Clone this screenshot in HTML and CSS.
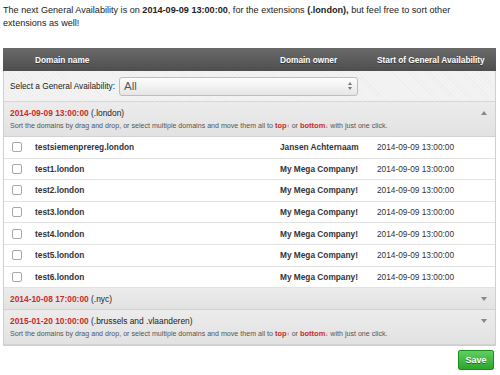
FILE: index.html
```html
<!DOCTYPE html>
<html lang="en">
<head>
    <meta charset="UTF-8">
    <title>General Availability order</title>
    <link rel="stylesheet" href="styles.css">
</head>
<body>
    <p class="intro">The next General Availability is on <b>2014-09-09 13:00:00</b>, for the extensions <b>(.london),</b> but feel free to sort other extensions as well!</p>

    <div class="ga-table">
        <div class="ga-head">
            <span></span>
            <span>Domain name</span>
            <span>Domain owner</span>
            <span>Start of General Availability</span>
        </div>

        <div class="ga-filter">
            <label>Select a General Availability:</label>
            <div class="select">
                <span>All</span>
                <span class="spin"><i class="up"></i><i class="down"></i></span>
            </div>
        </div>

        <!-- .london -->
        <div class="group open">
            <div class="group-title"><span class="date">2014-09-09 13:00:00</span> (.london)</div>
            <div class="group-desc">Sort the domains by drag and drop, or select multiple domains and move them all to <b>top<small>↑</small></b> or <b>bottom<small>↓</small></b> with just one click.</div>
            <span class="caret up"></span>
        </div>
        <div class="row"><span class="check"></span><b>testsiemenprereg.london</b><b>Jansen Achternaam</b><span>2014-09-09 13:00:00</span></div>
        <div class="row"><span class="check"></span><b>test1.london</b><b>My Mega Company!</b><span>2014-09-09 13:00:00</span></div>
        <div class="row"><span class="check"></span><b>test2.london</b><b>My Mega Company!</b><span>2014-09-09 13:00:00</span></div>
        <div class="row"><span class="check"></span><b>test3.london</b><b>My Mega Company!</b><span>2014-09-09 13:00:00</span></div>
        <div class="row"><span class="check"></span><b>test4.london</b><b>My Mega Company!</b><span>2014-09-09 13:00:00</span></div>
        <div class="row"><span class="check"></span><b>test5.london</b><b>My Mega Company!</b><span>2014-09-09 13:00:00</span></div>
        <div class="row"><span class="check"></span><b>test6.london</b><b>My Mega Company!</b><span>2014-09-09 13:00:00</span></div>

        <!-- .nyc -->
        <div class="group">
            <div class="group-title"><span class="date">2014-10-08 17:00:00</span> (.nyc)</div>
            <span class="caret down"></span>
        </div>

        <!-- .brussels -->
        <div class="group">
            <div class="group-title"><span class="date">2015-01-20 10:00:00</span> (.brussels and .vlaanderen)</div>
            <div class="group-desc">Sort the domains by drag and drop, or select multiple domains and move them all to <b>top<small>↑</small></b> or <b>bottom<small>↓</small></b> with just one click.</div>
            <span class="caret down"></span>
        </div>
    </div>

    <div class="actions">
        <button class="save">Save</button>
    </div>
</body>
</html>
```

FILE: styles.css
```css
body {
    margin: 0;
    padding: 3px 4px 0 3px;
    font-family: "Liberation Sans", Arial, sans-serif;
    color: #222;
    background: #fff;
}
.intro {
    margin: 0;
    font-size: 9.1px;
    line-height: 13px;
    padding-top: 1px;
}
.ga-table {
    margin-top: 18px;
    border: 1px solid #cfcfcf;
    border-top: none;
    font-size: 8.3px;
}
.ga-head,
.row {
    display: grid;
    grid-template-columns: 31px 245px 97px 1fr;
    align-items: center;
}
.ga-head {
    height: 23px;
    margin: 0 -1px;
    padding-left: 1px;
    background: linear-gradient(#6a6a6a, #4e4e4e);
    color: #fff;
    font-weight: bold;
    text-shadow: 0 1px 0 #333;
}
.ga-filter {
    display: flex;
    align-items: center;
    gap: 4px;
    height: 30px;
    padding-left: 6px;
    background-color: #f3f3f3;
    background-image: repeating-linear-gradient(45deg, rgba(0,0,0,0.018) 0 1px, transparent 1px 3px);
    border-bottom: 1px solid #d6d6d6;
}
.select {
    display: flex;
    align-items: center;
    justify-content: space-between;
    width: 228px;
    height: 17px;
    padding: 0 5px 0 4px;
    border: 1px solid #bdbdbd;
    border-radius: 3px;
    background: linear-gradient(#fdfdfd, #e6e6e6);
    font-size: 11.5px;
    color: #555;
}
.spin {
    display: flex;
    flex-direction: column;
    gap: 2px;
}
.spin i {
    width: 0;
    height: 0;
    border-left: 2px solid transparent;
    border-right: 2px solid transparent;
}
.spin .up { border-bottom: 3px solid #777; }
.spin .down { border-top: 3px solid #777; }
.group {
    position: relative;
    padding: 6px 6px 5px 6px;
    background: linear-gradient(#ececec, #e2e2e2);
    border-bottom: 1px solid #d2d2d2;
}
.group-title {
    font-size: 8.4px;
    line-height: 10px;
}
.date {
    color: #cc2a2a;
    font-weight: bold;
}
.group-desc {
    margin-top: 3px;
    font-size: 7.1px;
    line-height: 10px;
    color: #555;
}
.group-desc b {
    color: #cc2a2a;
    font-size: 7.5px;
}
.group-desc small {
    font-size: 6px;
    font-weight: normal;
}
.caret {
    position: absolute;
    right: 8px;
    top: 9px;
    width: 0;
    height: 0;
    border-left: 3px solid transparent;
    border-right: 3px solid transparent;
}
.caret.up { border-bottom: 4px solid #888; }
.caret.down { border-top: 4px solid #888; }
.row {
    height: 20.6px;
    background: #fff;
    border-bottom: 1px solid #e2e2e2;
    color: #333;
}
.row b { color: #333; }
.check {
    justify-self: start;
    margin-left: 8px;
    width: 8px;
    height: 8px;
    border: 1px solid #a8a8a8;
    border-radius: 2px;
    background: #fff;
}
.actions {
    display: flex;
    justify-content: flex-end;
    padding: 4px 2px 0 0;
}
.save {
    width: 36px;
    height: 20px;
    padding: 0;
    border: 1px solid #1e8e1e;
    border-radius: 2px;
    background: linear-gradient(#5fcf5f, #2aa62a);
    color: #fff;
    font-family: "Liberation Sans", Arial, sans-serif;
    font-size: 9px;
    font-weight: bold;
    text-shadow: 0 1px 0 #1a6a1a;
}
```
